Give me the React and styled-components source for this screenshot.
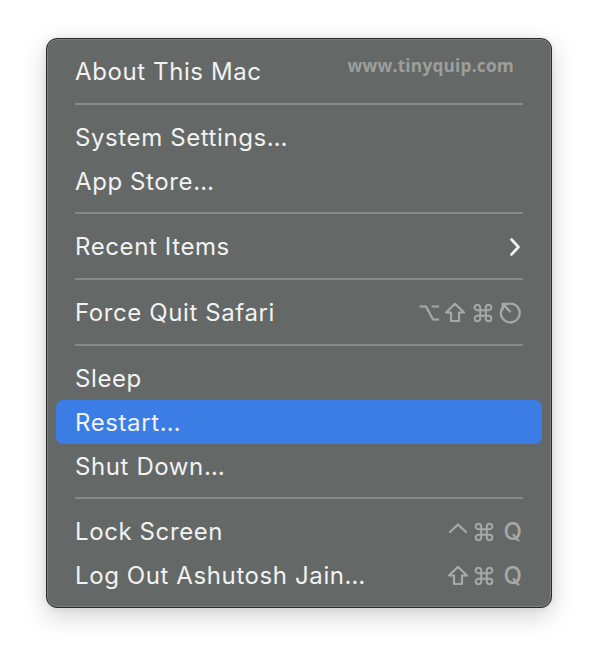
import React from "react";
import styled, { createGlobalStyle } from "styled-components";

const Global = createGlobalStyle`
  html, body { margin: 0; padding: 0; background: #ffffff; }
  body { font-family: Inter, "Noto Sans", sans-serif; }
`;

const Page = styled.div`
  width: 598px;
  height: 662px;
  padding: 38px 0 0 46px;
  box-sizing: border-box;
`;

const Menu = styled.div`
  position: relative;
  width: 506px;
  height: 570px;
  box-sizing: border-box;
  background: #646866;
  border: 1px solid #2b2c2b;
  border-radius: 11px;
  box-shadow: inset 0 0 0 1px #7c7f7d, 0 8px 26px rgba(0, 0, 0, 0.18), 0 0 6px rgba(0,0,0,0.08);
  padding: 10px 9px;
  display: flex;
  flex-direction: column;
`;

const Row = styled.div`
  height: 44px;
  display: flex;
  align-items: center;
  justify-content: space-between;
  padding: 1px 20px 0 19px;
  box-sizing: border-box;
  border-radius: 7px;
  background: ${(p) => (p.$active ? "#3b7de4" : "transparent")};
  color: #f2f2f2;
  font-size: 24px;
  letter-spacing: 0.6px;
`;

const Separator = styled.div`
  height: 22px;
  display: flex;
  align-items: center;
  padding: 0 19px;
  &::after {
    content: "";
    flex: 1;
    height: 2px;
    background: #878a88;
  }
`;

const Shortcut = styled.span`
  display: flex;
  align-items: center;
  color: #a6a9a7;
`;

const Slot = styled.span`
  display: flex;
  align-items: center;
  margin-left: ${(p) => p.$ml || 0}px;
`;

const KeyLetter = styled.span`
  font-family: Inter, sans-serif;
  font-weight: 500;
  font-size: 24px;
  letter-spacing: 0;
  color: #a6a9a7;
  line-height: 1;
`;

const Watermark = styled.div`
  position: absolute;
  top: 15px;
  right: 37px;
  color: #9c9f9d;
  font-family: "Open Sans", sans-serif;
  font-weight: 700;
  font-size: 17.3px;
  letter-spacing: 0.2px;
`;

const C = "#a6a9a7";
const SW = 2.2;

const Chevron = () => (
  <svg width="14" height="20" viewBox="0 0 14 20">
    <path d="M3.5 2.5 L10.5 10 L3.5 17.5" fill="none" stroke="#f2f2f2" strokeWidth="2.6" strokeLinecap="round" strokeLinejoin="round" />
  </svg>
);

const OptionIcon = () => (
  <svg width="22" height="18" viewBox="0 0 22 18">
    <path d="M1.5 2.5 H8 L15 15.5 H21 M13.5 2.5 H21" fill="none" stroke={C} strokeWidth={SW} strokeLinejoin="round" />
  </svg>
);

const ShiftIcon = () => (
  <svg width="22" height="21" viewBox="0 0 22 21">
    <path d="M11 1.8 L20 10.5 H15 V19 H7 V10.5 H2 Z" fill="none" stroke={C} strokeWidth={SW} strokeLinejoin="round" />
  </svg>
);

const CommandIcon = () => (
  <svg width="20" height="20" viewBox="0 0 18 18">
    <path
      d="M6.5 6.5 V4 A2.5 2.5 0 1 0 4 6.5 H14 A2.5 2.5 0 1 0 11.5 4 V14 A2.5 2.5 0 1 0 14 11.5 H4 A2.5 2.5 0 1 0 6.5 14 Z"
      fill="none"
      stroke={C}
      strokeWidth="1.8"
      strokeLinejoin="round"
    />
  </svg>
);

const ControlIcon = () => (
  <svg width="20" height="19" viewBox="0 0 20 19">
    <path d="M2 10 L10 2.5 L18 10" fill="none" stroke={C} strokeWidth={SW} strokeLinecap="round" strokeLinejoin="round" />
  </svg>
);

const RestartIcon = () => (
  <svg width="24" height="24" viewBox="0 0 23 23">
    <path d="M6.5 4.2 A9 9 0 1 0 11.5 2.5" fill="none" stroke={C} strokeWidth={SW} strokeLinecap="round" />
    <path d="M4.5 2.8 L11.5 10 M4.5 2.8 V8.2 M4.5 2.8 H9.8" fill="none" stroke={C} strokeWidth={SW} strokeLinecap="round" strokeLinejoin="round" />
  </svg>
);

export default function App() {
  return (
    <>
      <Global />
      <Page>
        <Menu>
          <Watermark>www.tinyquip.com</Watermark>
          <Row>About This Mac</Row>
          <Separator />
          <Row>System Settings…</Row>
          <Row>App Store…</Row>
          <Separator />
          <Row>
            Recent Items
            <Chevron />
          </Row>
          <Separator />
          <Row>
            Force Quit Safari
            <Shortcut>
              <Slot><OptionIcon /></Slot>
              <Slot $ml={4}><ShiftIcon /></Slot>
              <Slot $ml={7}><CommandIcon /></Slot>
              <Slot $ml={5}><RestartIcon /></Slot>
            </Shortcut>
          </Row>
          <Separator />
          <Row>Sleep</Row>
          <Row $active>Restart…</Row>
          <Row>Shut Down…</Row>
          <Separator />
          <Row>
            Lock Screen
            <Shortcut>
              <Slot><ControlIcon /></Slot>
              <Slot $ml={6}><CommandIcon /></Slot>
              <Slot $ml={10}><KeyLetter>Q</KeyLetter></Slot>
            </Shortcut>
          </Row>
          <Row>
            Log Out Ashutosh Jain…
            <Shortcut>
              <Slot><ShiftIcon /></Slot>
              <Slot $ml={5}><CommandIcon /></Slot>
              <Slot $ml={10}><KeyLetter>Q</KeyLetter></Slot>
            </Shortcut>
          </Row>
        </Menu>
      </Page>
    </>
  );
}
